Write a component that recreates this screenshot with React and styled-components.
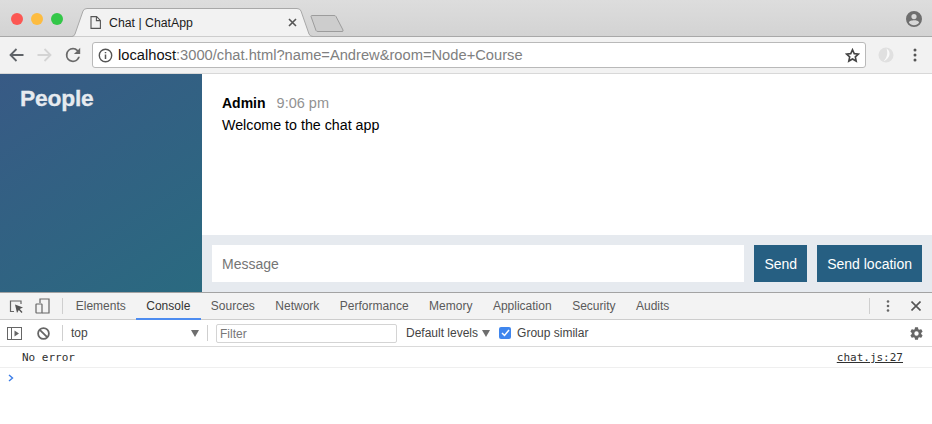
import React from "react";
import styled, { createGlobalStyle } from "styled-components";

const GlobalStyle = createGlobalStyle`
  html, body {
    margin: 0;
    padding: 0;
    width: 932px;
    height: 424px;
    overflow: hidden;
    background: #fff;
    font-family: "Liberation Sans", Arial, sans-serif;
  }
`;

const Window = styled.div`
  width: 932px;
  height: 424px;
  display: flex;
  flex-direction: column;
  overflow: hidden;
`;

/* browser chrome */
const TabStrip = styled.div`
  height: 36px;
  flex: none;
  display: flex;
  align-items: flex-end;
  background: linear-gradient(#dddddd, #d3d3d3);
  border-bottom: 1px solid #a8a8a8;
  position: relative;
`;

const Lights = styled.div`
  width: 70px;
  flex: none;
  display: flex;
  gap: 8px;
  padding: 0 0 0 11px;
  align-self: flex-start;
  margin-top: 13px;
  box-sizing: border-box;
`;

const Light = styled.span`
  width: 12px;
  height: 12px;
  border-radius: 50%;
  background: ${(p) => p.$color};
`;

const Tab = styled.div`
  width: 250px;
  height: 29px;
  flex: none;
  margin-bottom: -1px;
  position: relative;
  display: flex;
  align-items: center;
  padding: 0 0 0 20px;
  box-sizing: border-box;
  font-size: 12.3px;
  color: #1c1c1c;
  z-index: 1;
`;

const TabShape = styled.svg`
  position: absolute;
  left: 0;
  top: 0;
  z-index: -1;
`;

const TabTitle = styled.span`
  margin-left: 8px;
  flex: 1;
`;

const TabClose = styled.svg`
  margin-right: 23px;
`;

const NewTab = styled.svg`
  flex: none;
  margin: 0 0 3px -10px;
`;

const Profile = styled.svg`
  margin-left: auto;
  margin-right: 10px;
  align-self: flex-start;
  margin-top: 11px;
`;

const Toolbar = styled.div`
  height: 36px;
  flex: none;
  display: flex;
  align-items: center;
  background: #f2f2f2;
  border-bottom: 1px solid #d8d8d8;
  padding: 0 0 0 9px;
`;

const NavIcon = styled.svg`
  flex: none;
  margin-right: ${(p) => p.$gap}px;
`;

const Omnibox = styled.div`
  width: 774px;
  height: 26px;
  box-sizing: border-box;
  display: flex;
  align-items: center;
  background: #fff;
  border: 1px solid #b9b9b9;
  border-radius: 3px;
  padding: 0 5px;
  font-size: 14.7px;
  color: #808080;
  white-space: nowrap;
`;

const Host = styled.span`
  color: #111;
`;

const Url = styled.span`
  margin-left: 5px;
  flex: 1;
`;

const ToolbarEnd = styled.div`
  display: flex;
  align-items: center;
  margin-left: 11px;
`;

const MenuDots = styled.svg`
  margin-left: 18px;
`;

/* chat page */
const Page = styled.div`
  height: 218px;
  flex: none;
  display: flex;
`;

const Sidebar = styled.aside`
  width: 202px;
  flex: none;
  background: linear-gradient(325deg, #2a6a80 0%, #385a85 100%);
  color: #e6eaef;
  padding: 12px 20px;
  box-sizing: border-box;
`;

const SidebarTitle = styled.h3`
  margin: 0;
  font-size: 22.8px;
  line-height: 25px;
  font-weight: 700;
  letter-spacing: -0.2px;
  -webkit-text-stroke: 0.3px #e6eaef;
`;

const Chat = styled.main`
  flex: 1;
  display: flex;
  flex-direction: column;
`;

const Messages = styled.div`
  flex: 1;
  padding: 21px 20px 0;
`;

const MessageHead = styled.div`
  display: flex;
  align-items: baseline;
  font-size: 14px;
  line-height: 17px;
`;

const Sender = styled.strong`
  margin-right: 11px;
  color: #000;
`;

const Time = styled.span`
  color: #929292;
  font-size: 14.5px;
`;

const MessageBody = styled.p`
  margin: 5px 0 0;
  font-size: 14.25px;
  line-height: 17px;
  color: #000;
`;

const Footer = styled.form`
  height: 57px;
  box-sizing: border-box;
  display: flex;
  gap: 10px;
  padding: 10px;
  background: #e6eaef;
`;

const MessageInput = styled.div`
  flex: 1;
  background: #fff;
  color: #757575;
  font-size: 14px;
  line-height: 39px;
  height: 37px;
  padding: 0 10px;
`;

const Button = styled.button`
  border: 0;
  padding: 0 10px;
  height: 37px;
  background: #265f82;
  color: #fff;
  font: 14px "Liberation Sans", Arial, sans-serif;
`;

/* devtools */
const DevTools = styled.div`
  flex: 1;
  display: flex;
  flex-direction: column;
  border-top: 1px solid #a3a3a3;
  box-sizing: border-box;
  color: #333;
`;

const DevTabs = styled.div`
  height: 27px;
  box-sizing: border-box;
  flex: none;
  display: flex;
  align-items: stretch;
  background: #f3f3f3;
  border-bottom: 1px solid #cdcdcd;
  font-size: 12px;
`;

const DevIcons = styled.div`
  display: flex;
  align-items: center;
  gap: 11px;
  padding-left: 9px;
`;

const Divider = styled.span`
  width: 1px;
  height: 16px;
  background: #cfcfcf;
  align-self: center;
  flex: none;
  margin: ${(p) => p.$margin};
`;

const DevTab = styled.div`
  padding: 0 10.25px;
  display: flex;
  align-items: center;
  margin-bottom: -1px;
  color: ${(p) => (p.$active ? "#333" : "#5a5a5a")};
  border-bottom: 2px solid ${(p) => (p.$active ? "#4d8cf0" : "transparent")};
  box-sizing: border-box;
`;

const DevEnd = styled.div`
  margin-left: auto;
  display: flex;
  align-items: center;
  padding-right: 11px;
`;

const CloseDevTools = styled.svg`
  margin-left: 21px;
`;

const ConsoleBar = styled.div`
  height: 27px;
  box-sizing: border-box;
  flex: none;
  display: flex;
  align-items: center;
  border-bottom: 1px solid #dadada;
  background: #fff;
  font-size: 12px;
  color: #444;
  padding-left: 7px;
`;

const BlockIcon = styled.svg`
  margin-left: 15px;
`;

const ContextSelect = styled.div`
  width: 128px;
  flex: none;
  display: flex;
  align-items: center;
  justify-content: space-between;
`;

const Filter = styled.div`
  width: 181px;
  height: 19px;
  flex: none;
  box-sizing: border-box;
  border: 1px solid #d4d4d4;
  border-radius: 2px;
  padding-left: 3px;
  line-height: 18px;
  color: #777;
`;

const Levels = styled.div`
  display: flex;
  align-items: center;
  gap: 4px;
  margin-left: 9px;
`;

const Check = styled.span`
  width: 12px;
  height: 12px;
  margin-left: 9px;
  margin-right: 6px;
  border-radius: 2px;
  background: #3f86ee;
  display: flex;
  align-items: center;
  justify-content: center;
  flex: none;
`;

const Gear = styled.svg`
  margin-left: auto;
  margin-right: 8px;
`;

const LogRow = styled.div`
  height: 21px;
  box-sizing: border-box;
  flex: none;
  display: flex;
  align-items: center;
  justify-content: space-between;
  padding: 1px 29px 0 22px;
  border-bottom: 1px solid #efefef;
  font-family: "DejaVu Sans Mono", "Liberation Mono", monospace;
  font-size: 11px;
  color: #303030;
`;

const Source = styled.span`
  text-decoration: underline;
`;

const Prompt = styled.div`
  padding: 6px 0 0 8px;
  line-height: 0;
`;

const Triangle = styled.span`
  width: 0;
  height: 0;
  border-left: 4px solid transparent;
  border-right: 4px solid transparent;
  border-top: 7px solid #6e6e6e;
  flex: none;
`;

const tabs = ["Elements", "Console", "Sources", "Network", "Performance", "Memory", "Application", "Security", "Audits"];

export default function App() {
  return (
    <Window>
      <GlobalStyle />
      <TabStrip>
        <Lights>
          <Light $color="#fc5753" />
          <Light $color="#fdbc40" />
          <Light $color="#33c748" />
        </Lights>
        <Tab>
          <TabShape width="250" height="29" viewBox="0 0 250 29">
            <path d="M0 28.5 H2 Q4 28.5 5 26 L13 3 Q14 0.5 17 0.5 H227 Q230 0.5 231 3 L239 26 Q240 28.5 243 28.5" fill="#f2f2f2" stroke="#a8a8a8" />
          </TabShape>
          <svg width="11" height="13" viewBox="0 0 11 13" fill="none" stroke="#555" strokeWidth="1.1">
            <path d="M1 .6 H6.6 L10.4 4.4 V12.4 H1 Z M6.4 .8 V4.6 H10.2" />
          </svg>
          <TabTitle>Chat | ChatApp</TabTitle>
          <TabClose width="9" height="9" viewBox="0 0 9 9" stroke="#555" strokeWidth="1.6">
            <path d="M1 1 L8 8 M8 1 L1 8" />
          </TabClose>
        </Tab>
        <NewTab width="36" height="18" viewBox="0 0 36 18">
          <path d="M1 1.5 Q1 .5 2 .5 H24 Q25.500 .5 26 1.500 L33 15 Q33.500 16.500 32 16.500 H8 Q6.500 16.500 6 15.500 Z" fill="#cdcdcd" stroke="#9c9c9c" />
        </NewTab>
        <Profile width="16" height="16" viewBox="0 0 16 16">
          <path fill="#6e6e6e" fillRule="evenodd" d="M8 0a8 8 0 1 0 0 16A8 8 0 0 0 8 0zm0 3a2.600 2.600 0 1 1 0 5.200A2.600 2.600 0 0 1 8 3zm0 11.300c-2.100 0-4-1-5.100-2.700C3 10 6.300 9.300 8 9.300s5 .7 5.100 2.300C12 13.300 10.100 14.300 8 14.300z" />
        </Profile>
      </TabStrip>
      <Toolbar>
        <NavIcon $gap={13} width="15" height="14" viewBox="0 0 15 14" fill="none" stroke="#5f6368" strokeWidth="1.800">
          <path d="M14.500 7 H2 M7.500 1 L1.500 7 L7.500 13" />
        </NavIcon>
        <NavIcon $gap={12} width="15" height="14" viewBox="0 0 15 14" fill="none" stroke="#d4d4d4" strokeWidth="1.800">
          <path d="M.5 7 H13 M7.500 1 L13.500 7 L7.500 13" />
        </NavIcon>
        <NavIcon $gap={10} width="18" height="18" viewBox="0 0 24 24" fill="#6a6a6a">
          <path d="M17.650 6.350A7.960 7.960 0 0 0 12 4a8 8 0 1 0 7.730 10h-2.080A6 6 0 1 1 12 6c1.660 0 3.140.69 4.220 1.780L13 11h7V4l-2.350 2.350z" transform="translate(-2.400 -2.400) scale(1.200)" />
        </NavIcon>
        <Omnibox>
          <svg width="15" height="15" viewBox="0 0 15 15" fill="none">
            <circle cx="7.500" cy="7.500" r="6.200" stroke="#555" strokeWidth="1.400" />
            <path d="M7.500 6.500 V11 M7.500 4 V5.300" stroke="#555" strokeWidth="1.500" />
          </svg>
          <Url>
            <Host>localhost</Host>:3000/chat.html?name=Andrew&amp;room=Node+Course
          </Url>
          <svg width="15" height="15" viewBox="0 0 24 24" fill="none" stroke="#444" strokeWidth="2.600">
            <path d="M12 2.800 L14.800 9 L21.500 9.700 L16.500 14.200 L17.900 20.900 L12 17.500 L6.100 20.900 L7.500 14.200 L2.500 9.700 L9.200 9 Z" />
          </svg>
        </Omnibox>
        <ToolbarEnd>
          <svg width="18" height="18" viewBox="0 0 18 18">
            <circle cx="9" cy="9" r="7.500" fill="#e0e0e0" />
            <path d="M9.500 2.500 C14 5 14 12 6.500 15.500 C10.500 11 11 6.500 9.500 2.500 Z" fill="#fafafa" />
          </svg>
          <MenuDots width="4" height="14" viewBox="0 0 4 14" fill="#555">
            <circle cx="2" cy="2" r="1.500" />
            <circle cx="2" cy="7" r="1.500" />
            <circle cx="2" cy="12" r="1.500" />
          </MenuDots>
        </ToolbarEnd>
      </Toolbar>

      <Page>
        <Sidebar>
          <SidebarTitle>People</SidebarTitle>
        </Sidebar>
        <Chat>
          <Messages>
            <MessageHead>
              <Sender>Admin</Sender>
              <Time>9:06 pm</Time>
            </MessageHead>
            <MessageBody>Welcome to the chat app</MessageBody>
          </Messages>
          <Footer>
            <MessageInput>Message</MessageInput>
            <Button type="button">Send</Button>
            <Button type="button">Send location</Button>
          </Footer>
        </Chat>
      </Page>

      <DevTools>
        <DevTabs>
          <DevIcons>
            <svg width="15" height="15" viewBox="0 0 15 15" fill="none">
              <path d="M5 12.500 H1.500 V2 H12 V5" stroke="#666" strokeWidth="1.200" />
              <path d="M6 5.500 L14 8.500 L10.800 10 L13.500 13 L12.500 14 L9.800 11 L8 14 Z" fill="#555" />
            </svg>
            <svg width="15" height="16" viewBox="0 0 15 16" fill="none" stroke="#666" strokeWidth="1.200">
              <path d="M5 5 V1 H14 V15 H7" />
              <rect x="1" y="6" width="6" height="9" rx=".5" />
            </svg>
          </DevIcons>
          <Divider $margin="0 2.5px 0 12px" />
          {tabs.map((t) => (
            <DevTab key={t} $active={t === "Console"}>
              {t}
            </DevTab>
          ))}
          <DevEnd>
            <Divider $margin="0 16px 0 0" />
            <svg width="4" height="14" viewBox="0 0 4 14" fill="#666">
              <circle cx="2" cy="2.500" r="1.300" />
              <circle cx="2" cy="7" r="1.300" />
              <circle cx="2" cy="11.500" r="1.300" />
            </svg>
            <CloseDevTools width="10" height="10" viewBox="0 0 10 10" stroke="#555" strokeWidth="1.600">
              <path d="M.5 .5 L9.500 9.500 M9.500 .5 L.5 9.500" />
            </CloseDevTools>
          </DevEnd>
        </DevTabs>
        <ConsoleBar>
          <svg width="15" height="13" viewBox="0 0 15 13" fill="none">
            <rect x=".5" y=".5" width="14" height="12" stroke="#666" />
            <path d="M4.500 .5 V12.500" stroke="#666" />
            <path d="M7.500 3.500 L12 6.500 L7.500 9.500 Z" fill="#666" />
          </svg>
          <BlockIcon width="13" height="13" viewBox="0 0 13 13" fill="none" stroke="#666" strokeWidth="1.800">
            <circle cx="6.500" cy="6.500" r="5.400" />
            <path d="M2.800 2.800 L10.200 10.200" />
          </BlockIcon>
          <Divider $margin="0 8px 0 12px" />
          <ContextSelect>
            top
            <Triangle />
          </ContextSelect>
          <Divider $margin="0 8px 0 8px" />
          <Filter>Filter</Filter>
          <Levels>
            Default levels
            <Triangle />
          </Levels>
          <Check>
            <svg width="9" height="8" viewBox="0 0 9 8" fill="none" stroke="#fff" strokeWidth="1.500">
              <path d="M1 4 L3.500 6.500 L8 1" />
            </svg>
          </Check>
          Group similar
          <Gear width="15" height="15" viewBox="0 0 24 24" fill="#666">
            <path d="M19.430 12.980c.04-.32.07-.64.07-.98s-.03-.66-.07-.98l2.110-1.650a.5.500 0 0 0 .12-.64l-2-3.460a.5.500 0 0 0-.61-.22l-2.490 1a7.300 7.300 0 0 0-1.690-.98l-.38-2.650A.49.490 0 0 0 14 2h-4a.49.490 0 0 0-.49.420l-.38 2.650c-.61.25-1.170.59-1.690.98l-2.490-1a.5.500 0 0 0-.61.220l-2 3.460a.490.490 0 0 0 .12.640l2.110 1.650c-.04.32-.07.650-.07.980s.03.660.07.980l-2.110 1.650a.5.500 0 0 0-.12.640l2 3.460c.12.220.39.300.61.220l2.490-1c.52.400 1.080.730 1.690.980l.38 2.650c.03.240.24.420.49.420h4c.25 0 .46-.18.49-.42l.38-2.650c.61-.25 1.170-.59 1.690-.98l2.490 1c.23.090.49 0 .61-.22l2-3.460a.5.500 0 0 0-.12-.64l-2.110-1.650zM12 15.500a3.500 3.500 0 1 1 0-7 3.500 3.500 0 0 1 0 7z" />
          </Gear>
        </ConsoleBar>
        <LogRow>
          <span>No error</span>
          <Source>chat.js:27</Source>
        </LogRow>
        <Prompt>
          <svg width="6" height="8" viewBox="0 0 6 8" fill="none" stroke="#3b7de8" strokeWidth="1.400">
            <path d="M1 1 L4.500 4 L1 7" />
          </svg>
        </Prompt>
      </DevTools>
    </Window>
  );
}
